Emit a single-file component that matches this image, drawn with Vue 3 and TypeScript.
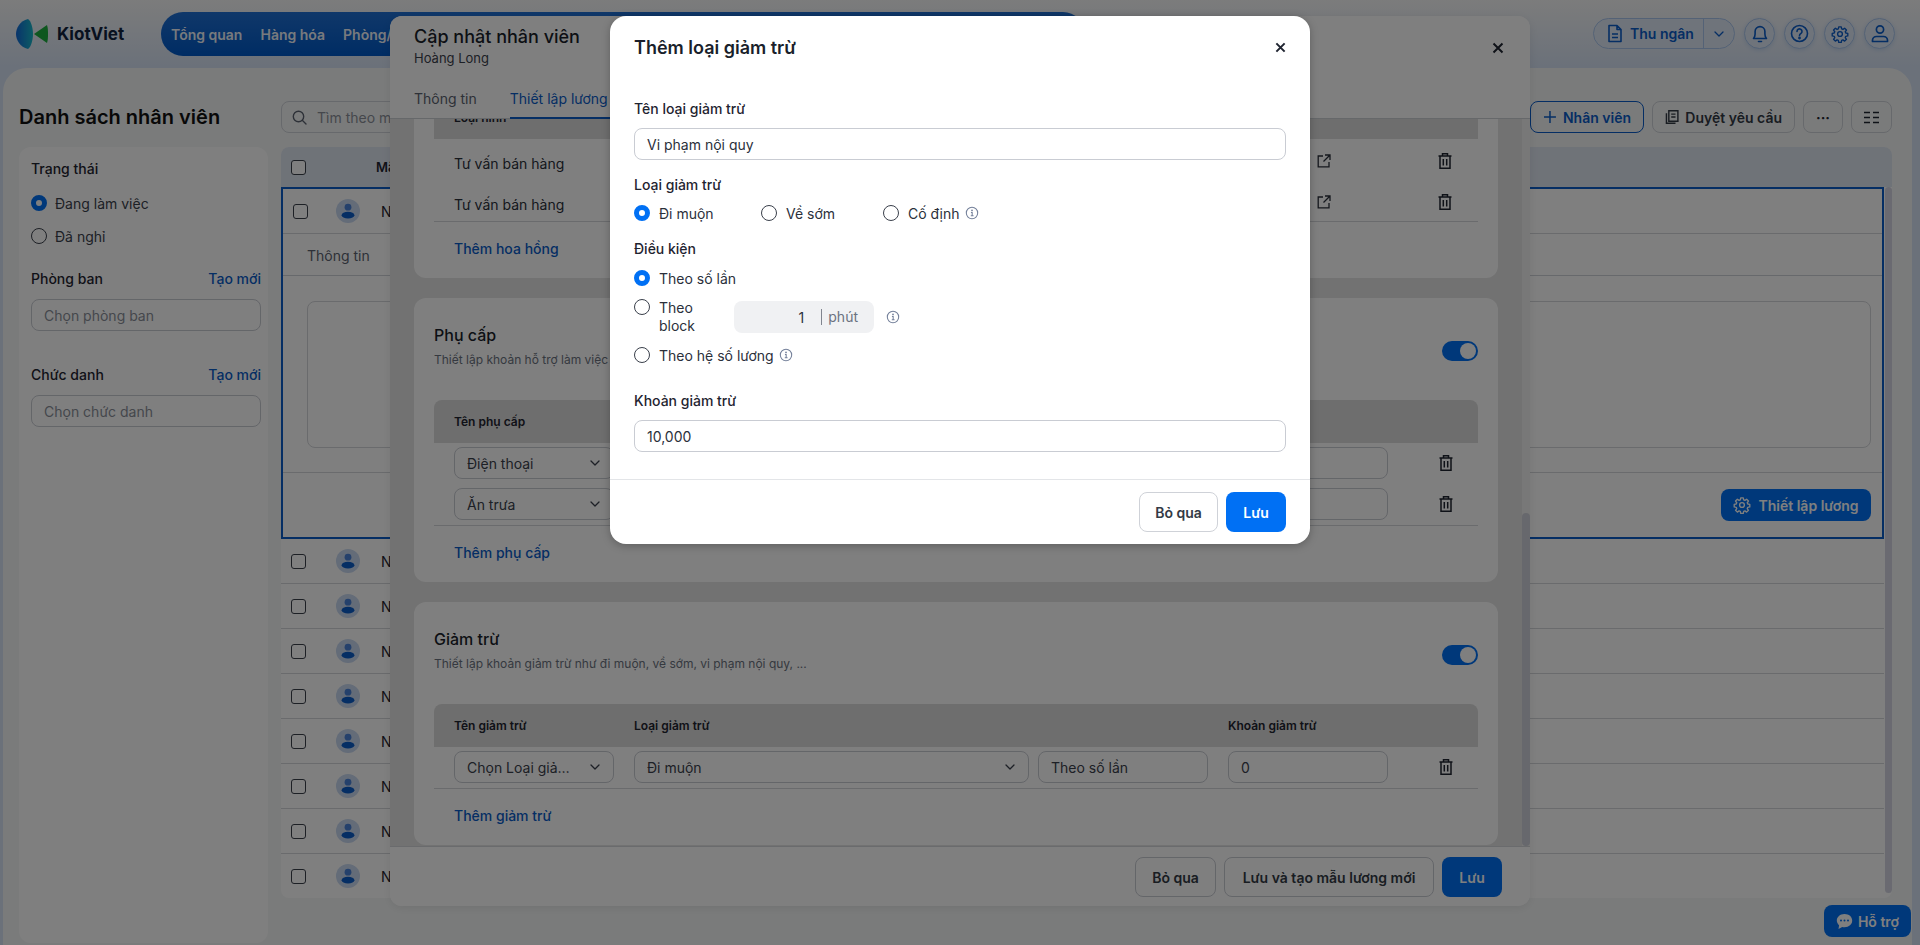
<template>
  <div class="page">
    <svg class="sprite" aria-hidden="true">
      <defs>
        <linearGradient id="lens" x1="0" x2="1" y1="0" y2="0">
          <stop offset="0" stop-color="#1268d8" />
          <stop offset="1" stop-color="#18b8c8" />
        </linearGradient>
      </defs>
      <symbol id="i-trash" viewBox="0 0 16 18">
        <path d="M1.5 4h13M5.5 4V1.8h5V4M3 4v12.2h10V4M6.3 7v6.5M9.7 7v6.5" fill="none" stroke="currentColor" stroke-width="1.5" />
      </symbol>
      <symbol id="i-chevron" viewBox="0 0 12 12">
        <path d="M2 4l4 4 4-4" fill="none" stroke="currentColor" stroke-width="1.3" stroke-linecap="round" stroke-linejoin="round" />
      </symbol>
      <symbol id="i-info" viewBox="0 0 16 16">
        <circle cx="8" cy="8" r="6.5" fill="none" stroke="currentColor" stroke-width="1.2" />
        <circle cx="8" cy="5" r="1" fill="currentColor" />
        <path d="M6.8 7.4H8.2v3.8M6.6 11.2h3.2" fill="none" stroke="currentColor" stroke-width="1.2" />
      </symbol>
      <symbol id="i-link" viewBox="0 0 14 14">
        <path d="M6 2H1.2v10.8H12V8M8 1h5v5M13 1L6.5 7.5" fill="none" stroke="currentColor" stroke-width="1.3" />
      </symbol>
      <symbol id="i-gear" viewBox="0 0 24 24">
        <path d="M10.3 2.5h3.4l.5 2.7 1.7.7 2.3-1.6 2.4 2.4-1.6 2.3.7 1.7 2.7.5v3.4l-2.7.5-.7 1.7 1.6 2.3-2.4 2.4-2.3-1.6-1.7.7-.5 2.7h-3.4l-.5-2.7-1.7-.7-2.3 1.6-2.4-2.4 1.6-2.3-.7-1.7-2.7-.5v-3.4l2.7-.5.7-1.7L3.4 6.7l2.4-2.4 2.3 1.6 1.7-.7z" fill="none" stroke="currentColor" stroke-width="1.8" stroke-linejoin="round" />
        <circle cx="12" cy="12" r="3.2" fill="none" stroke="currentColor" stroke-width="1.8" />
      </symbol>
      <symbol id="i-avatar" viewBox="0 0 24 24">
        <circle cx="12" cy="12" r="12" fill="#c8d8f0" />
        <circle cx="12" cy="8.2" r="3.4" fill="#4a82d8" />
        <ellipse cx="12" cy="16.2" rx="6.4" ry="3.4" fill="#0a5cc8" />
      </symbol>
    </svg>

    <header class="topbar">
      <div class="brand">
        <svg class="logo" viewBox="0 0 32 32">
          <path d="M12 1C4 3 0 10 0 16s4 13 12 15c3-2 5-9 5-15S15 3 12 1z" fill="url(#lens)" />
          <path d="M31 7L18 16l13 9c1-3 1-6 1-9s0-6-1-9z" fill="#1dae3f" />
        </svg>
        <span class="brand-name">KiotViet</span>
      </div>
      <nav class="nav">
        <a v-for="item in navItems" :key="item">{{ item }}</a>
      </nav>
      <div class="top-actions">
        <div class="cashier">
          <span class="cashier-main">
            <svg width="16" height="19" viewBox="0 0 16 19" fill="none" stroke="currentColor" stroke-width="1.6">
              <path d="M2 1.5h8l4 4v12H2zM10 1.5v4h4M5 10h6M5 13.5h6" stroke-linejoin="round" />
            </svg>
            Thu ngân
          </span>
          <span class="cashier-more"><svg width="12" height="12"><use href="#i-chevron" /></svg></span>
        </div>
        <span class="round">
          <svg width="16" height="19" viewBox="0 0 16 19" fill="none" stroke="currentColor" stroke-width="1.6">
            <path d="M1.5 14.5c1.2-1.2 1.6-2.4 1.6-4.5V7.5a4.9 4.9 0 019.8 0V10c0 2.1.4 3.3 1.6 4.5zM6.5 17.5h3" stroke-linejoin="round" stroke-linecap="round" />
          </svg>
        </span>
        <span class="round">
          <svg width="19" height="19" viewBox="0 0 19 19" fill="none" stroke="currentColor" stroke-width="1.6">
            <circle cx="9.5" cy="9.5" r="8" />
            <path d="M7 7.4a2.5 2.5 0 114 2c-.9.6-1.5 1-1.5 2.1" stroke-linecap="round" />
            <circle cx="9.5" cy="14" r=".6" fill="currentColor" />
          </svg>
        </span>
        <span class="round"><svg width="18" height="18"><use href="#i-gear" /></svg></span>
        <span class="round">
          <svg width="18" height="19" viewBox="0 0 18 19" fill="none" stroke="currentColor" stroke-width="1.7">
            <circle cx="9" cy="5.5" r="3.6" />
            <path d="M1.5 17.5v-1.2c0-2.2 1.8-3.8 4-3.8h7c2.2 0 4 1.6 4 3.8v1.2z" stroke-linejoin="round" />
          </svg>
        </span>
      </div>
    </header>

    <main class="panel">
      <div class="toolbar">
        <h1>Danh sách nhân viên</h1>
        <div class="search">
          <svg width="15" height="15" viewBox="0 0 15 15" fill="none" stroke="currentColor" stroke-width="1.4">
            <circle cx="6.5" cy="6.5" r="5.2" />
            <path d="M10.5 10.5L14 14" stroke-linecap="round" />
          </svg>
          <span>Tìm theo mã, tên nhân viên</span>
        </div>
        <button class="btn btn-outline-blue">
          <svg width="14" height="14" viewBox="0 0 14 14" stroke="currentColor" stroke-width="1.5"><path d="M7 1v12M1 7h12" /></svg>
          Nhân viên
        </button>
        <button class="btn btn-approve">
          <svg width="15" height="16" viewBox="0 0 15 16" fill="none" stroke="currentColor" stroke-width="1.5">
            <path d="M4 1.5h9.5v11H4zM6.5 5h4.5M6.5 8h4.5M1.5 4v10.5H11" />
          </svg>
          Duyệt yêu cầu
        </button>
        <button class="btn btn-icon btn-dots">···</button>
        <button class="btn btn-icon btn-grid">
          <svg width="15" height="13" viewBox="0 0 15 13" stroke="currentColor" stroke-width="1.6">
            <path d="M0 1.5h6M9 1.5h6M0 6.5h6M9 6.5h6M0 11.5h6M9 11.5h6" />
          </svg>
        </button>
      </div>

      <div class="content">
        <aside class="filters">
          <div class="f-title">Trạng thái</div>
          <label class="f-radio f-radio-first"><span class="radio on"></span>Đang làm việc</label>
          <label class="f-radio f-radio-next"><span class="radio"></span>Đã nghỉ</label>
          <div class="f-head f-head-first"><span class="f-title">Phòng ban</span><a>Tạo mới</a></div>
          <div class="f-input">Chọn phòng ban</div>
          <div class="f-head f-head-second"><span class="f-title">Chức danh</span><a>Tạo mới</a></div>
          <div class="f-input">Chọn chức danh</div>
        </aside>

        <section class="table">
          <div class="thead">
            <span class="check"></span>
            <span class="th-code">Mã nhân viên</span>
          </div>
          <div class="tbody">
            <div class="rows">
              <div class="selected">
                <div class="row row-open">
                  <span class="check"></span>
                  <svg class="avatar"><use href="#i-avatar" /></svg>
                  <span class="cell-code">NV000001</span>
                </div>
                <div class="detail-tabs"><span>Thông tin</span></div>
                <div class="detail-body"><div class="detail-box"></div></div>
                <div class="detail-foot">
                  <button class="btn-primary">
                    <svg width="18" height="18"><use href="#i-gear" /></svg>
                    Thiết lập lương
                  </button>
                </div>
              </div>
              <div v-for="code in employeeCodes" :key="code" class="row">
                <span class="check"></span>
                <svg class="avatar"><use href="#i-avatar" /></svg>
                <span class="cell-code">{{ code }}</span>
              </div>
            </div>
            <div class="table-scroll"></div>
          </div>
        </section>
      </div>
    </main>

    <button class="support">
      <svg width="17" height="17" viewBox="0 0 17 17">
        <path d="M8.5 1C4 1 .8 3.9.8 7.6c0 1.9.9 3.5 2.3 4.7L2.5 16l3.7-2c.7.2 1.5.3 2.3.3 4.5 0 7.7-2.900 7.7-6.700S13 1 8.500 1z" fill="currentColor" />
        <circle cx="5" cy="7.6" r="1" fill="#0070f4" />
        <circle cx="8.5" cy="7.6" r="1" fill="#0070f4" />
        <circle cx="12" cy="7.6" r="1" fill="#0070f4" />
      </svg>
      Hỗ trợ
    </button>

    <section class="drawer">
      <div class="drawer-head">
        <div class="drawer-top">
          <div>
            <div class="drawer-title">Cập nhật nhân viên</div>
            <div class="drawer-sub">Hoàng Long</div>
          </div>
          <span class="close">
            <svg width="12" height="12" viewBox="0 0 12 12" stroke="currentColor" stroke-width="2"><path d="M1.5 1.5l9 9M10.5 1.5l-9 9" /></svg>
          </span>
        </div>
        <div class="drawer-tabs">
          <span>Thông tin</span>
          <span class="active">Thiết lập lương</span>
        </div>
      </div>

      <div class="drawer-body">
        <div class="cards">
          <div class="card card-scrolled">
            <div class="t-head"><span>Loại hình</span></div>
            <div class="t-rows t-rows-plain">
              <div v-for="(row, i) in commissions" :key="i" class="t-row">
                <span class="plain">{{ row }}</span>
                <svg class="link-icon"><use href="#i-link" /></svg>
                <svg class="trash"><use href="#i-trash" /></svg>
              </div>
            </div>
            <a class="add">Thêm hoa hồng</a>
          </div>

          <div class="card">
            <div class="card-top">
              <div>
                <h3>Phụ cấp</h3>
                <p>Thiết lập khoản hỗ trợ làm việc như điện thoại, ăn trưa, đi lại, ...</p>
              </div>
              <span class="toggle"></span>
            </div>
            <div class="t-head"><span>Tên phụ cấp</span></div>
            <div class="t-rows">
              <div v-for="name in allowances" :key="name" class="t-row">
                <div class="select narrow"><span>{{ name }}</span><svg width="12" height="12"><use href="#i-chevron" /></svg></div>
                <div class="spacer"></div>
                <div class="input amount">0</div>
                <svg class="trash"><use href="#i-trash" /></svg>
              </div>
            </div>
            <a class="add">Thêm phụ cấp</a>
          </div>

          <div class="card">
            <div class="card-top">
              <div>
                <h3>Giảm trừ</h3>
                <p>Thiết lập khoản giảm trừ như đi muộn, về sớm, vi phạm nội quy, ...</p>
              </div>
              <span class="toggle"></span>
            </div>
            <div class="t-head">
              <span class="col-a">Tên giảm trừ</span>
              <span class="col-b">Loại giảm trừ</span>
              <span>Khoản giảm trừ</span>
            </div>
            <div class="t-rows">
              <div class="t-row">
                <div class="select narrow"><span>Chọn Loại giảm trừ</span><svg width="12" height="12"><use href="#i-chevron" /></svg></div>
                <div class="select wide"><span>Đi muộn</span><svg width="12" height="12"><use href="#i-chevron" /></svg></div>
                <div class="input basis">Theo số lần</div>
                <div class="input amount">0</div>
                <svg class="trash"><use href="#i-trash" /></svg>
              </div>
            </div>
            <a class="add">Thêm giảm trừ</a>
          </div>
        </div>
        <div class="drawer-scroll"><div class="thumb"></div></div>
      </div>

      <div class="drawer-foot">
        <button class="foot-btn foot-skip">Bỏ qua</button>
        <button class="foot-btn foot-template">Lưu và tạo mẫu lương mới</button>
        <button class="foot-btn foot-primary">Lưu</button>
      </div>
    </section>

    <div class="overlay"></div>

    <section class="dialog">
      <div class="dialog-head">
        <h2>Thêm loại giảm trừ</h2>
        <svg width="11" height="11" viewBox="0 0 12 12" stroke="#1f2430" stroke-width="2.2"><path d="M1.5 1.5l9 9M10.5 1.5l-9 9" /></svg>
      </div>
      <div class="dialog-body">
        <div class="label label-first">Tên loại giảm trừ</div>
        <div class="d-input">Vi phạm nội quy</div>

        <div class="label label-type">Loại giảm trừ</div>
        <div class="type-row">
          <label class="d-radio type-a"><span class="radio on"></span>Đi muộn</label>
          <label class="d-radio type-b"><span class="radio"></span>Về sớm</label>
          <label class="d-radio">
            <span class="radio"></span>Cố định
            <svg class="info"><use href="#i-info" /></svg>
          </label>
        </div>

        <div class="label label-cond">Điều kiện</div>
        <label class="d-radio cond-first"><span class="radio on"></span>Theo số lần</label>
        <div class="block-row">
          <span class="radio"></span>
          <span class="block-text">Theo block</span>
          <div class="minutes">
            <span class="minutes-value">1</span>
            <span class="minutes-unit">phút</span>
          </div>
          <svg class="info"><use href="#i-info" /></svg>
        </div>
        <label class="d-radio cond-last">
          <span class="radio"></span>Theo hệ số lương
          <svg class="info"><use href="#i-info" /></svg>
        </label>

        <div class="label label-amount">Khoản giảm trừ</div>
        <div class="d-input">10,000</div>
      </div>
      <div class="dialog-foot">
        <button class="d-btn">Bỏ qua</button>
        <button class="d-btn d-primary">Lưu</button>
      </div>
    </section>
  </div>
</template>

<script setup lang="ts">
const navItems: string[] = ['Tổng quan', 'Hàng hóa', 'Phòng/Bàn', 'Giao dịch', 'Đối tác', 'Nhân viên', 'Sổ quỹ', 'Báo cáo', 'Bán online']

const employeeCodes: string[] = ['NV000002', 'NV000003', 'NV000004', 'NV000005', 'NV000006', 'NV000007', 'NV000008', 'NV000009']

const commissions: string[] = ['Tư vấn bán hàng', 'Tư vấn bán hàng']

const allowances: string[] = ['Điện thoại', 'Ăn trưa']
</script>

<style>
html,
body {
  margin: 0;
  overflow: hidden;
}
</style>

<style scoped>
* {
  box-sizing: border-box;
}

.page {
  width: 1920px;
  height: 945px;
  position: relative;
  overflow: hidden;
  font-family: Inter, "Noto Sans", sans-serif;
  font-size: 14px;
  color: #1f2430;
  background: linear-gradient(#f8f8f8 0, #d6e2f4 68px, #d6e2f4 100px);
}

.sprite {
  position: absolute;
  width: 0;
  height: 0;
}

button {
  font-family: inherit;
  cursor: pointer;
}

/* top bar */
.topbar {
  height: 68px;
  padding: 12px 25px 0 16px;
  display: flex;
  align-items: flex-start;
}

.brand {
  width: 145px;
  height: 44px;
  display: flex;
  align-items: center;
  gap: 9px;
}

.logo {
  width: 32px;
  height: 32px;
}

.brand-name {
  font-size: 17px;
  font-weight: 700;
  color: #10233f;
}

.nav {
  width: 924px;
  height: 44px;
  padding-left: 10px;
  display: flex;
  align-items: center;
  gap: 18px;
  border-radius: 22px;
  background: linear-gradient(#2070d4, #0059c8);
  color: rgba(255, 255, 255, 0.95);
  font-weight: 600;
  white-space: nowrap;
}

.top-actions {
  margin: 6px 0 0 auto;
  display: flex;
  gap: 9px;
}

.cashier {
  width: 142px;
  height: 31px;
  display: flex;
  border: 1px solid #a9c5ec;
  border-radius: 16px;
  background: #dfe9f7;
  color: #0a5cc8;
  font-weight: 600;
}

.cashier-main {
  width: 110px;
  padding-left: 13px;
  display: flex;
  align-items: center;
  gap: 7px;
  border-right: 1px solid #a9c5ec;
}

.cashier-more {
  flex: 1;
  display: flex;
  align-items: center;
  justify-content: center;
}

.round {
  width: 31px;
  height: 31px;
  display: flex;
  align-items: center;
  justify-content: center;
  border: 1px solid #a9c5ec;
  border-radius: 50%;
  background: #dfe9f7;
  color: #0a5cc8;
  box-shadow: 0 1px 4px rgba(10, 92, 200, 0.15);
}

/* main panel */
.panel {
  height: 877px;
  margin: 0 8px 0 3px;
  padding: 33px 20px 0 16px;
  border-radius: 24px 24px 0 0;
  background: #f5f7f7;
}

.toolbar {
  height: 32px;
  display: flex;
  align-items: center;
  gap: 8px;
}

.toolbar h1 {
  width: 254px;
  margin: 0;
  font-size: 20px;
  line-height: 32px;
  font-weight: 600;
  color: #111;
}

.search {
  flex: 1;
  height: 32px;
  padding-left: 10px;
  display: flex;
  align-items: center;
  gap: 10px;
  border: 1px solid #cfd2d8;
  border-radius: 8px;
  color: #5c6370;
}

.search span {
  color: #8a8f99;
}

.btn {
  height: 32px;
  padding: 0 12px;
  display: flex;
  align-items: center;
  gap: 6px;
  border: 1px solid #cfd2d8;
  border-radius: 8px;
  background: transparent;
  color: #333a45;
  font-size: 14px;
  font-weight: 600;
  white-space: nowrap;
}

.btn-outline-blue {
  width: 114px;
  border-color: #0a5cc8;
  color: #0a5cc8;
}

.btn-approve {
  width: 143px;
}

.btn-icon {
  width: 40px;
  padding: 0;
  justify-content: center;
  color: #1f2430;
}

.btn-grid {
  width: 41px;
}

.btn-dots {
  font-size: 14px;
  font-weight: 700;
}

.content {
  margin-top: 14px;
  display: flex;
  gap: 13px;
}

/* filters */
.filters {
  width: 249px;
  height: 796px;
  padding: 12px 7px 12px 12px;
  border-radius: 12px;
  background: #fff;
}

.f-title {
  line-height: 20px;
  font-weight: 500;
  color: #1f2430;
}

.f-radio {
  height: 20px;
  display: flex;
  align-items: center;
  gap: 8px;
  color: #3b414c;
}

.f-radio-first {
  margin-top: 14px;
}

.f-radio-next {
  margin-top: 13px;
}

.f-head {
  display: flex;
  justify-content: space-between;
  line-height: 20px;
}

.f-head a {
  color: #0a5cc8;
  font-weight: 500;
}

.f-head-first {
  margin-top: 23px;
}

.f-head-second {
  margin-top: 34px;
}

.f-input {
  height: 32px;
  margin-top: 10px;
  padding-left: 12px;
  display: flex;
  align-items: center;
  border: 1px solid #c9ccd3;
  border-radius: 8px;
  color: #8a8f99;
}

.radio {
  flex: none;
  width: 16px;
  height: 16px;
  border: 1.5px solid #3a404b;
  border-radius: 50%;
  background: #fff;
}

.radio.on {
  border: 5px solid #0070f4;
}

/* table */
.table {
  flex: 1;
  min-width: 0;
  height: 751px;
  border-radius: 8px;
  background: #fff;
  overflow: hidden;
}

.thead {
  height: 40px;
  padding-left: 10px;
  display: flex;
  align-items: center;
  background: #dfe6f1;
  font-weight: 600;
}

.th-code {
  margin-left: 70px;
  font-size: 13px;
}

.check {
  flex: none;
  width: 15px;
  height: 15px;
  border: 1px solid #3a404b;
  border-radius: 3px;
  background: #fff;
}

.tbody {
  display: flex;
  gap: 1px;
}

.rows {
  flex: 1;
  min-width: 0;
}

.table-scroll {
  width: 7px;
  height: 706px;
  border-radius: 4px;
  background: #d4d5e2;
}

.row {
  height: 45px;
  padding-left: 10px;
  display: flex;
  align-items: center;
  border-bottom: 1px solid #d4d6da;
}

.row-open {
  padding-left: 10px;
}

.row-open .avatar {
  margin-left: 28px;
}

.avatar {
  width: 24px;
  height: 24px;
  margin-left: 30px;
}

.cell-code {
  margin-left: 21px;
  color: #1f2430;
}

.selected {
  height: 352px;
  border: 2px solid #0a5cc8;
}

.selected .row {
  height: 45px;
}

.detail-tabs {
  height: 42px;
  padding: 2px 0 0 24px;
  display: flex;
  align-items: center;
  border-bottom: 1px solid #cfd2d8;
  color: #5c6370;
}

.detail-body {
  height: 197px;
  padding: 25px 11px 24px 24px;
  border-bottom: 1px solid #d4d6da;
}

.detail-box {
  height: 147px;
  border: 1px solid #d4d6da;
  border-radius: 8px;
}

.detail-foot {
  height: 64px;
  padding-right: 11px;
  display: flex;
  align-items: center;
  justify-content: flex-end;
}

.btn-primary {
  width: 150px;
  height: 32px;
  display: flex;
  align-items: center;
  justify-content: center;
  gap: 7px;
  border: 0;
  border-radius: 8px;
  background: #0070f4;
  color: #fff;
  font-size: 14px;
  font-weight: 600;
}

.support {
  position: absolute;
  right: 9px;
  top: 905px;
  width: 87px;
  height: 32px;
  display: flex;
  align-items: center;
  justify-content: center;
  gap: 5px;
  border: 0;
  border-radius: 8px;
  background: #0070f4;
  color: #fff;
  font-size: 14px;
  font-weight: 600;
}

/* drawer */
.drawer {
  position: absolute;
  z-index: 0;
  left: 390px;
  top: 16px;
  width: 1140px;
  height: 890px;
  display: flex;
  flex-direction: column;
  border-radius: 12px;
  background: #fff;
  overflow: hidden;
  box-shadow: 0 2px 10px rgba(0, 0, 0, 0.08);
}

.drawer-head {
  position: relative;
  z-index: 1;
  height: 103px;
  padding: 9px 26px 0 24px;
  border-bottom: 1px solid #cdd0d4;
  background: #fff;
}

.drawer-top {
  display: flex;
  justify-content: space-between;
  align-items: center;
}

.drawer-title {
  font-size: 18px;
  line-height: 24px;
  font-weight: 500;
  color: #1a1f2b;
}

.drawer-sub {
  font-size: 13px;
  line-height: 18px;
  color: #3b414c;
}

.close {
  margin-top: 4px;
  color: #1f2430;
}

.drawer-tabs {
  height: 30px;
  margin-top: 22px;
  display: flex;
  gap: 33px;
  line-height: 20px;
  color: #5c6370;
}

.drawer-tabs span {
  height: 30px;
}

.drawer-tabs .active {
  padding-right: 2px;
  border-bottom: 2px solid #0a5cc8;
  color: #0a5cc8;
}

.drawer-body {
  flex: 1;
  min-height: 0;
  display: flex;
  overflow: hidden;
}

.cards {
  flex: 1;
  min-width: 0;
  padding: 0 24px;
  background: #e4e4e4;
}

.card {
  margin-bottom: 20px;
  padding: 25px 20px 19px;
  border-radius: 12px;
  background: #fff;
}

.card-scrolled {
  margin-top: -23px;
  padding-top: 0;
  border-radius: 0 0 12px 12px;
}

.card-top {
  height: 45px;
  margin-bottom: 32px;
  display: flex;
  justify-content: space-between;
  align-items: center;
}

.card-top h3 {
  margin: 0;
  font-size: 16px;
  line-height: 24px;
  font-weight: 500;
  color: #1a1f2b;
}

.card-top p {
  margin: 5px 0 0;
  font-size: 12px;
  line-height: 16px;
  color: #6b7280;
}

.toggle {
  width: 36px;
  height: 20px;
  margin-top: 10px;
  position: relative;
  border-radius: 10px;
  background: #0070f4;
}

.toggle::after {
  content: "";
  position: absolute;
  right: 2px;
  top: 2px;
  width: 16px;
  height: 16px;
  border-radius: 50%;
  background: #fff;
}

.t-head {
  height: 43px;
  padding-left: 20px;
  display: flex;
  align-items: center;
  border-radius: 8px 8px 0 0;
  background: #dcdcdc;
  font-size: 12px;
  font-weight: 600;
  color: #1f2430;
}

.col-a {
  width: 180px;
}

.col-b {
  width: 594px;
}

.t-rows {
  padding: 4px 5px 5px 20px;
  display: flex;
  flex-direction: column;
  gap: 9px;
  border-bottom: 1px solid #d4d6da;
}

.t-rows-plain {
  padding-top: 8px;
  padding-bottom: 1px;
}

.t-row {
  height: 32px;
  display: flex;
  align-items: center;
  gap: 9px;
}

.plain {
  width: 854px;
  color: #2b303b;
}

.link-icon {
  width: 14px;
  height: 14px;
  margin-top: -5px;
  color: #2b303b;
}

.select,
.input {
  height: 32px;
  padding: 0 12px;
  display: flex;
  align-items: center;
  border: 1px solid #c9ccd3;
  border-radius: 8px;
  color: #3b414c;
}

.select span {
  flex: 1;
  min-width: 0;
  overflow: hidden;
  white-space: nowrap;
  text-overflow: ellipsis;
}

.select svg {
  flex: none;
  margin-left: 8px;
}

.narrow {
  width: 160px;
  margin-right: 11px;
}

.wide {
  width: 395px;
}

.basis {
  width: 170px;
  margin-right: 11px;
}

.amount {
  width: 160px;
  margin-right: 41px;
}

.spacer {
  width: 585px;
}

.trash {
  flex: none;
  width: 16px;
  height: 18px;
  margin-left: 0;
  color: #1f2430;
}

.t-rows-plain .trash {
  margin: -5px 0 0 97px;
}

.add {
  display: block;
  margin: 17px 0 0 20px;
  line-height: 20px;
  font-weight: 500;
  color: #0a5cc8;
}

.drawer-scroll {
  width: 8px;
  background: #f0f0f0;
}

.thumb {
  height: 333px;
  margin-top: 394px;
  border-radius: 4px;
  background: #cfd0da;
}

.drawer-foot {
  height: 60px;
  padding: 10px 28px 0;
  display: flex;
  justify-content: flex-end;
  gap: 8px;
  border-top: 1px solid #d4d6da;
  background: #fff;
}

.foot-btn {
  height: 40px;
  padding: 0;
  border: 1px solid #c9ccd3;
  border-radius: 8px;
  background: #fff;
  color: #333a45;
  font-size: 14px;
  font-weight: 600;
}

.foot-skip {
  width: 81px;
}

.foot-template {
  width: 210px;
}

.foot-primary {
  width: 60px;
  border: 0;
  background: #0070f4;
  color: #fff;
}

/* overlay and dialog */
.overlay {
  position: absolute;
  inset: 0;
  background: rgba(0, 0, 0, 0.5);
}

.dialog {
  position: absolute;
  left: 610px;
  top: 16px;
  width: 700px;
  height: 528px;
  border-radius: 16px;
  background: #fff;
  box-shadow: 0 2px 8px rgba(0, 0, 0, 0.25);
}

.dialog-head {
  height: 62px;
  padding: 0 24px;
  display: flex;
  align-items: center;
  justify-content: space-between;
}

.dialog-head h2 {
  margin: 0;
  font-size: 18px;
  font-weight: 600;
  color: #1a1f2b;
}

.dialog-body {
  height: 402px;
  padding: 20px 24px 0;
  border-bottom: 1px solid #e3e5e8;
}

.label {
  line-height: 22px;
  font-weight: 500;
  color: #1f2430;
}

.label-first {
  margin-bottom: 8px;
}

.label-type {
  margin-top: 14px;
}

.label-cond {
  margin-top: 15px;
}

.label-amount {
  margin: 25px 0 8px;
}

.d-input {
  height: 32px;
  padding-left: 12px;
  display: flex;
  align-items: center;
  border: 1px solid #c9ccd3;
  border-radius: 8px;
  color: #2b303b;
}

.type-row {
  margin-top: 7px;
  display: flex;
}

.d-radio {
  height: 20px;
  display: flex;
  align-items: center;
  gap: 9px;
  color: #2b303b;
}

.type-a {
  width: 127px;
}

.type-b {
  width: 122px;
}

.info {
  width: 14px;
  height: 14px;
  margin-left: -4px;
  color: #74809a;
}

.cond-first {
  margin-top: 8px;
}

.block-row {
  height: 36px;
  margin-top: 11px;
  display: flex;
  align-items: flex-start;
}

.block-text {
  width: 60px;
  margin: 0 15px 0 9px;
  line-height: 18px;
  color: #2b303b;
}

.minutes {
  width: 140px;
  height: 32px;
  margin-top: 2px;
  padding-right: 16px;
  display: flex;
  align-items: center;
  justify-content: flex-end;
  border-radius: 8px;
  background: #f0f1f3;
  color: #2b303b;
}

.minutes-value {
  padding-right: 17px;
}

.minutes-unit {
  padding-left: 6px;
  line-height: 16px;
  border-left: 1px solid #80858f;
  color: #6b7280;
}

.block-row .info {
  margin: 11px 0 0 12px;
}

.cond-last {
  margin-top: 10px;
}

.dialog-foot {
  padding: 12px 24px 0;
  display: flex;
  justify-content: flex-end;
  gap: 8px;
}

.d-btn {
  width: 79px;
  height: 40px;
  border: 1px solid #cfd2d8;
  border-radius: 8px;
  background: #fff;
  color: #333a45;
  font-size: 14px;
  font-weight: 600;
}

.d-primary {
  width: 60px;
  border: 0;
  background: #0070f4;
  color: #fff;
}
</style>
